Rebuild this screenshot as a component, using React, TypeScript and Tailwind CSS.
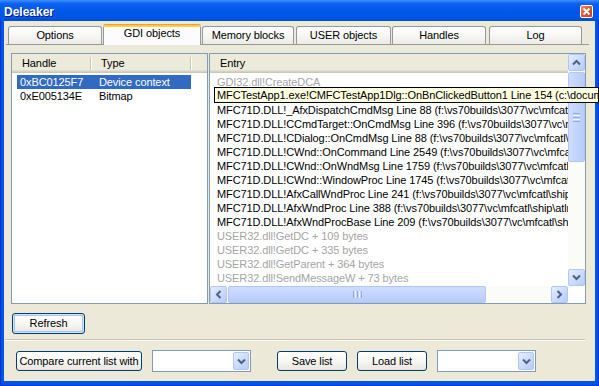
import React from "react";

type Dir = "up" | "down" | "left" | "right";

function Chevron({ dir }: { dir: Dir }) {
  const horiz = dir === "left" || dir === "right";
  const d: Record<Dir, string> = {
    up: "M1 5.5 L4.5 2 L8 5.5",
    down: "M1 1.5 L4.5 5 L8 1.5",
    left: "M5.5 1 L2 4.5 L5.5 8",
    right: "M1.5 1 L5 4.5 L1.5 8",
  };
  return (
    <svg width={horiz ? 7 : 9} height={horiz ? 9 : 7} viewBox={horiz ? "0 0 7 9" : "0 0 9 7"}>
      <path d={d[dir]} fill="none" stroke="#4D6185" strokeWidth="2" />
    </svg>
  );
}

function ScrollBtn({ dir }: { dir: Dir }) {
  return (
    <div className="w-[17px] h-[17px] shrink-0 rounded-[2px] border border-[#B3C6F3] bg-[linear-gradient(135deg,#E6EEFF_0%,#CBDAFC_55%,#B7CBF8_100%)] flex items-center justify-center">
      <Chevron dir={dir} />
    </div>
  );
}

function Tab({ label, w, ml }: { label: string; w: string; ml: string }) {
  return (
    <div
      className={`${w} ${ml} h-[18px] shrink-0 rounded-t-[3px] border border-b-0 border-[#919B9C] bg-[linear-gradient(to_bottom,#FFFFFF_0%,#F7F7F4_50%,#ECEBE6_100%)] flex items-center justify-center leading-[13px]`}
    >
      {label}
    </div>
  );
}

function XPButton({ label, cls }: { label: string; cls: string }) {
  return (
    <div
      className={`${cls} shrink-0 rounded-[3px] border border-[#003C74] bg-[linear-gradient(to_bottom,#FFFFFF_0%,#F6F6F3_55%,#E6E5DE_100%)] flex items-center justify-center leading-[13px]`}
    >
      {label}
    </div>
  );
}

function Combo({ ml }: { ml: string }) {
  return (
    <div className={`${ml} w-[99px] h-[22px] shrink-0 border border-[#7F9DB9] bg-white flex justify-end p-[1px]`}>
      <div className="w-[16px] h-[18px] rounded-[2px] border border-[#B3C6F3] bg-[linear-gradient(135deg,#E6EEFF_0%,#CBDAFC_55%,#B7CBF8_100%)] flex items-center justify-center">
        <Chevron dir="down" />
      </div>
    </div>
  );
}

const hdrShadow =
  "shadow-[inset_0_-1px_0_#CBC7B8,inset_0_-2px_0_#D6D2C2,inset_0_-3px_0_#E2DED0]";

function HdrDivider() {
  return <div className="w-[2px] h-[13px] shrink-0 border-l border-[#C7C5B2] bg-white" />;
}

const path = "f:\\vs70builds\\3077\\vc\\mfcatl\\ship\\atlmfc\\src\\mfc\\";

const entries: { t: string; g?: boolean }[] = [
  { t: "GDI32.dll!CreateDCA", g: true },
  { t: "MFCTestApp1.exe!CMFCTestApp1Dlg::OnBnClickedButton1 Line 154 (c:\\documents and settings)" },
  { t: `MFC71D.DLL!_AfxDispatchCmdMsg Line 88 (${path}cmdtarg.cpp)` },
  { t: `MFC71D.DLL!CCmdTarget::OnCmdMsg Line 396 (${path}cmdtarg.cpp)` },
  { t: `MFC71D.DLL!CDialog::OnCmdMsg Line 88 (${path}dlgcore.cpp)` },
  { t: `MFC71D.DLL!CWnd::OnCommand Line 2549 (${path}wincore.cpp)` },
  { t: `MFC71D.DLL!CWnd::OnWndMsg Line 1759 (${path}wincore.cpp)` },
  { t: `MFC71D.DLL!CWnd::WindowProc Line 1745 (${path}wincore.cpp)` },
  { t: `MFC71D.DLL!AfxCallWndProc Line 241 (${path}wincore.cpp)` },
  { t: `MFC71D.DLL!AfxWndProc Line 388 (${path}wincore.cpp)` },
  { t: `MFC71D.DLL!AfxWndProcBase Line 209 (${path}afxstate.cpp)` },
  { t: "USER32.dll!GetDC + 109 bytes", g: true },
  { t: "USER32.dll!GetDC + 335 bytes", g: true },
  { t: "USER32.dll!GetParent + 364 bytes", g: true },
  { t: "USER32.dll!SendMessageW + 73 bytes", g: true },
];

export default function App() {
  return (
    <div className="relative w-[599px] h-[386px] overflow-hidden flex flex-col bg-[#0055E5] shadow-[inset_0_0_0_1px_#0831D9] font-['Liberation_Sans',Arial,sans-serif] text-[11px] tracking-[-0.1px] text-black">
      {/* Title bar */}
      <div className="h-[21px] shrink-0 flex items-start pl-[4px] pr-[6px] bg-[linear-gradient(to_bottom,#3C8EFF_0%,#0A60F2_18%,#0058E8_55%,#0055E3_85%,#004CD6_100%)]">
        <div className="pt-[5px] leading-[15px] text-[12px] tracking-normal font-bold text-white [text-shadow:1px_1px_0_#0A1883]">
          Deleaker
        </div>
        <div className="ml-auto mt-[5px] w-[13px] h-[13px] rounded-[2px] border border-white bg-[linear-gradient(135deg,#F08C6C_0%,#E0552F_50%,#C8401E_100%)] flex items-center justify-center">
          <svg width="9" height="9" viewBox="0 0 9 9">
            <path d="M1.5 1.5 L7.5 7.5 M7.5 1.5 L1.5 7.5" stroke="white" strokeWidth="1.8" />
          </svg>
        </div>
      </div>

      {/* Client area */}
      <div className="flex-1 ml-[4px] mr-[4px] mb-[5px] bg-[#ECE9D8] flex flex-col">
        {/* Tabs */}
        <div className="mt-[3px] ml-[2px] mr-[6px] h-[21px] shrink-0 flex items-end pl-[2px] border-b border-[#919B9C]">
          <Tab label="Options" w="w-[94px]" ml="ml-0" />
          <div className="relative z-10 -mb-[1px] ml-[1px] w-[98px] h-[21px] shrink-0 flex flex-col border-x border-[#919B9C] rounded-t-[3px] bg-[#FCFCFE]">
            <div className="h-[3px] -mx-[1px] rounded-t-[3px] bg-[linear-gradient(to_bottom,#E68B2C_0%,#FFC73C_45%,#FFD35E_100%)]" />
            <div className="text-center leading-[13px]">GDI objects</div>
          </div>
          <Tab label="Memory blocks" w="w-[92px]" ml="ml-[1px]" />
          <Tab label="USER objects" w="w-[95px]" ml="ml-[2px]" />
          <Tab label="Handles" w="w-[94px]" ml="ml-[1px]" />
          <Tab label="Log" w="w-[93px]" ml="ml-[3px]" />
        </div>

        {/* Lists */}
        <div className="mt-[8px] ml-[7px] flex h-[251px] shrink-0">
          {/* Left list */}
          <div className="w-[197px] h-full border border-[#7F9DB9] bg-white flex flex-col">
            <div className={`h-[19px] shrink-0 flex items-center bg-[#EBEADB] ${hdrShadow}`}>
              <div className="w-[78px] pl-[10px] leading-[13px]">Handle</div>
              <HdrDivider />
              <div className="w-[98px] pl-[9px] leading-[13px]">Type</div>
              <HdrDivider />
            </div>
            <div className="mt-[2px] ml-[5px] w-[174px] flex flex-col">
              <div className="h-[14px] flex items-center bg-[#316AC5] text-white leading-[13px]">
                <div className="w-[82px] pl-[3px] shrink-0">0xBC0125F7</div>
                <div>Device context</div>
              </div>
              <div className="h-[14px] flex items-center leading-[13px]">
                <div className="w-[82px] pl-[3px] shrink-0">0xE005134E</div>
                <div>Bitmap</div>
              </div>
            </div>
          </div>

          {/* Right list */}
          <div className="ml-[1px] w-[377px] h-full border border-[#7F9DB9] bg-white flex flex-col">
            <div className="flex h-[232px] shrink-0">
              <div className="w-[358px] flex flex-col overflow-hidden">
                <div className={`h-[19px] shrink-0 flex items-center bg-[#EBEADB] ${hdrShadow}`}>
                  <div className="pl-[10px] leading-[13px]">Entry</div>
                </div>
                <div className="mt-[2px] flex flex-col">
                  {entries.map((e, i) => (
                    <div
                      key={i}
                      className={`h-[14px] pl-[7px] whitespace-nowrap leading-[14px] ${e.g ? "text-[#A5A5A5]" : "text-black"}`}
                    >
                      {e.t}
                    </div>
                  ))}
                </div>
              </div>
              {/* vertical scrollbar */}
              <div className="w-[17px] h-full flex flex-col bg-[#FBFBF7]">
                <ScrollBtn dir="up" />
                <div className="mt-[1px] h-[90px] rounded-[2px] border border-[#B3C6F3] bg-[linear-gradient(to_right,#CFDCFD_0%,#C3D4FC_50%,#B8CCF9_100%)] flex flex-col items-center justify-center gap-[1px]">
                  <div className="w-[7px] h-[1px] bg-[#8EA9EE]" />
                  <div className="w-[7px] h-[1px] bg-[#EEF3FF]" />
                  <div className="w-[7px] h-[1px] bg-[#8EA9EE]" />
                  <div className="w-[7px] h-[1px] bg-[#EEF3FF]" />
                  <div className="w-[7px] h-[1px] bg-[#8EA9EE]" />
                </div>
                <div className="flex-1" />
                <ScrollBtn dir="down" />
              </div>
            </div>
            {/* horizontal scrollbar */}
            <div className="flex h-[17px] shrink-0">
              <div className="w-[358px] flex bg-[#FBFBF7]">
                <ScrollBtn dir="left" />
                <div className="ml-[1px] w-[258px] h-full rounded-[2px] border border-[#B3C6F3] bg-[linear-gradient(to_bottom,#CFDCFD_0%,#C3D4FC_50%,#B8CCF9_100%)] flex items-center justify-center gap-[1px]">
                  <div className="w-[1px] h-[7px] bg-[#8EA9EE]" />
                  <div className="w-[1px] h-[7px] bg-[#EEF3FF]" />
                  <div className="w-[1px] h-[7px] bg-[#8EA9EE]" />
                  <div className="w-[1px] h-[7px] bg-[#EEF3FF]" />
                  <div className="w-[1px] h-[7px] bg-[#8EA9EE]" />
                </div>
                <div className="flex-1" />
                <ScrollBtn dir="right" />
              </div>
              <div className="flex-1 bg-white" />
            </div>
          </div>
        </div>

        {/* Refresh */}
        <div className="mt-[9px] ml-[8px] flex">
          <XPButton label="Refresh" cls="w-[73px] h-[21px] shadow-[inset_0_0_0_1px_#CEE7FF,inset_0_0_0_2px_#A7C4EE]" />
        </div>

        {/* Separator */}
        <div className="mt-[5px] ml-[1px] w-[580px] h-[2px] shrink-0 border-t border-[#C5C2B2] border-b border-b-white" />

        {/* Bottom row */}
        <div className="mt-[9px] ml-[12px] flex items-start">
          <XPButton label="Compare current list with" cls="mt-[1px] w-[126px] h-[20px]" />
          <Combo ml="ml-[10px]" />
          <XPButton label="Save list" cls="ml-[26px] mt-[1px] w-[70px] h-[20px]" />
          <XPButton label="Load list" cls="ml-[10px] mt-[1px] w-[70px] h-[20px]" />
          <Combo ml="ml-[10px]" />
        </div>
      </div>

      {/* Tooltip */}
      <div className="absolute left-[214px] top-[87px] right-0 h-[16px] border border-black bg-[#FFFFE1] pl-[2px] leading-[14px] whitespace-nowrap overflow-hidden">
        MFCTestApp1.exe!CMFCTestApp1Dlg::OnBnClickedButton1 Line 154 (c:\documents and settings)
      </div>
    </div>
  );
}
